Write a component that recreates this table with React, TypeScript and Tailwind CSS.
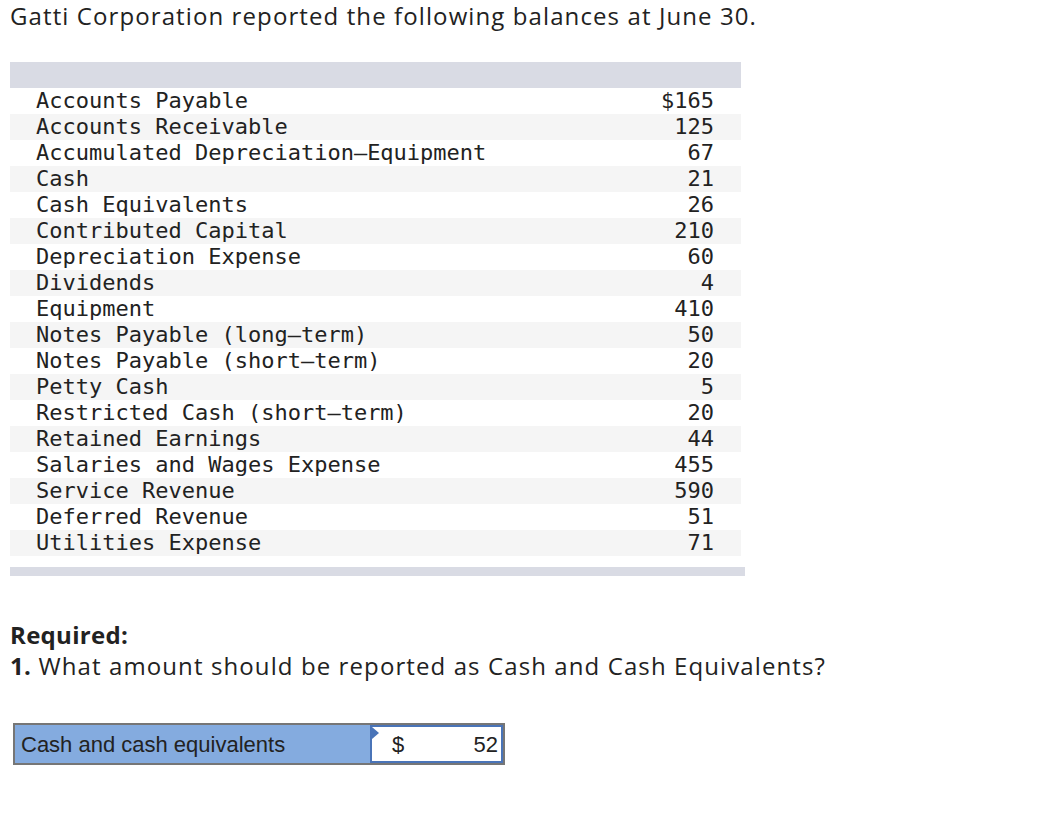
import React from "react";

const rows: { label: string; amount: string }[] = [
  { label: "Accounts Payable", amount: "$165" },
  { label: "Accounts Receivable", amount: "125" },
  { label: "Accumulated Depreciation—Equipment", amount: "67" },
  { label: "Cash", amount: "21" },
  { label: "Cash Equivalents", amount: "26" },
  { label: "Contributed Capital", amount: "210" },
  { label: "Depreciation Expense", amount: "60" },
  { label: "Dividends", amount: "4" },
  { label: "Equipment", amount: "410" },
  { label: "Notes Payable (long–term)", amount: "50" },
  { label: "Notes Payable (short–term)", amount: "20" },
  { label: "Petty Cash", amount: "5" },
  { label: "Restricted Cash (short–term)", amount: "20" },
  { label: "Retained Earnings", amount: "44" },
  { label: "Salaries and Wages Expense", amount: "455" },
  { label: "Service Revenue", amount: "590" },
  { label: "Deferred Revenue", amount: "51" },
  { label: "Utilities Expense", amount: "71" },
];

export default function App() {
  return (
    <div className="min-h-[833px] w-[1046px] bg-white text-[#222] font-['Open_Sans',sans-serif]">
      <div className="px-[10px]">
        <p className="text-[24px] leading-[32px] tracking-[1.1px] whitespace-nowrap">
          Gatti Corporation reported the following balances at June 30.
        </p>

        {/* tabel saldo */}
        <div className="mt-[30px] w-[735px]">
          <div className="h-[26px] w-[731px] bg-[#d9dbe4]" />
          {rows.map((row, idx) => (
            <div
              key={row.label + "-" + idx}
              className={
                "flex h-[26px] w-[731px] items-center justify-between pl-[26px] pr-[27px] font-['DejaVu_Sans_Mono',monospace] text-[22px] leading-[26px] text-[#222] " +
                (idx % 2 === 1 ? "bg-[#f5f5f5]" : "bg-white")
              }
            >
              <span className="whitespace-pre">{row.label}</span>
              <span>{row.amount}</span>
            </div>
          ))}
          <div className="mt-[11px] h-[9px] w-[735px] bg-[#d9dbe4]" />
        </div>

        <div className="mt-[43px] text-[24px] leading-[31px] tracking-[1.1px] whitespace-nowrap">
          <p className="font-bold tracking-[0.3px]">Required:</p>
          <p>
            <span className="font-bold tracking-[0.3px]">1.</span> What amount should be reported as Cash and Cash Equivalents?
          </p>
        </div>

        {/* jawaban */}
        <div className="mt-[42px] ml-[3px] flex h-[42px] w-[492px] border-2 border-[#767676] font-['Liberation_Sans',Arial,sans-serif]">
          <div className="flex w-[355px] items-center bg-[#84abdf] pl-[6px] text-[22px] text-[#222]">
            Cash and cash equivalents
          </div>
          <div className="relative flex flex-1 items-center justify-between border-2 border-[#4a74b8] bg-white pl-[20px] pr-[3px] text-[22px] text-[#222]">
            <span className="absolute left-0 top-0 h-0 w-0 border-t-[6px] border-r-[6px] border-b-[6px] border-t-transparent border-b-transparent border-r-transparent border-l-[7px] border-l-[#4a74b8]" />
            <span>$</span>
            <span>52</span>
          </div>
        </div>
      </div>
    </div>
  );
}
